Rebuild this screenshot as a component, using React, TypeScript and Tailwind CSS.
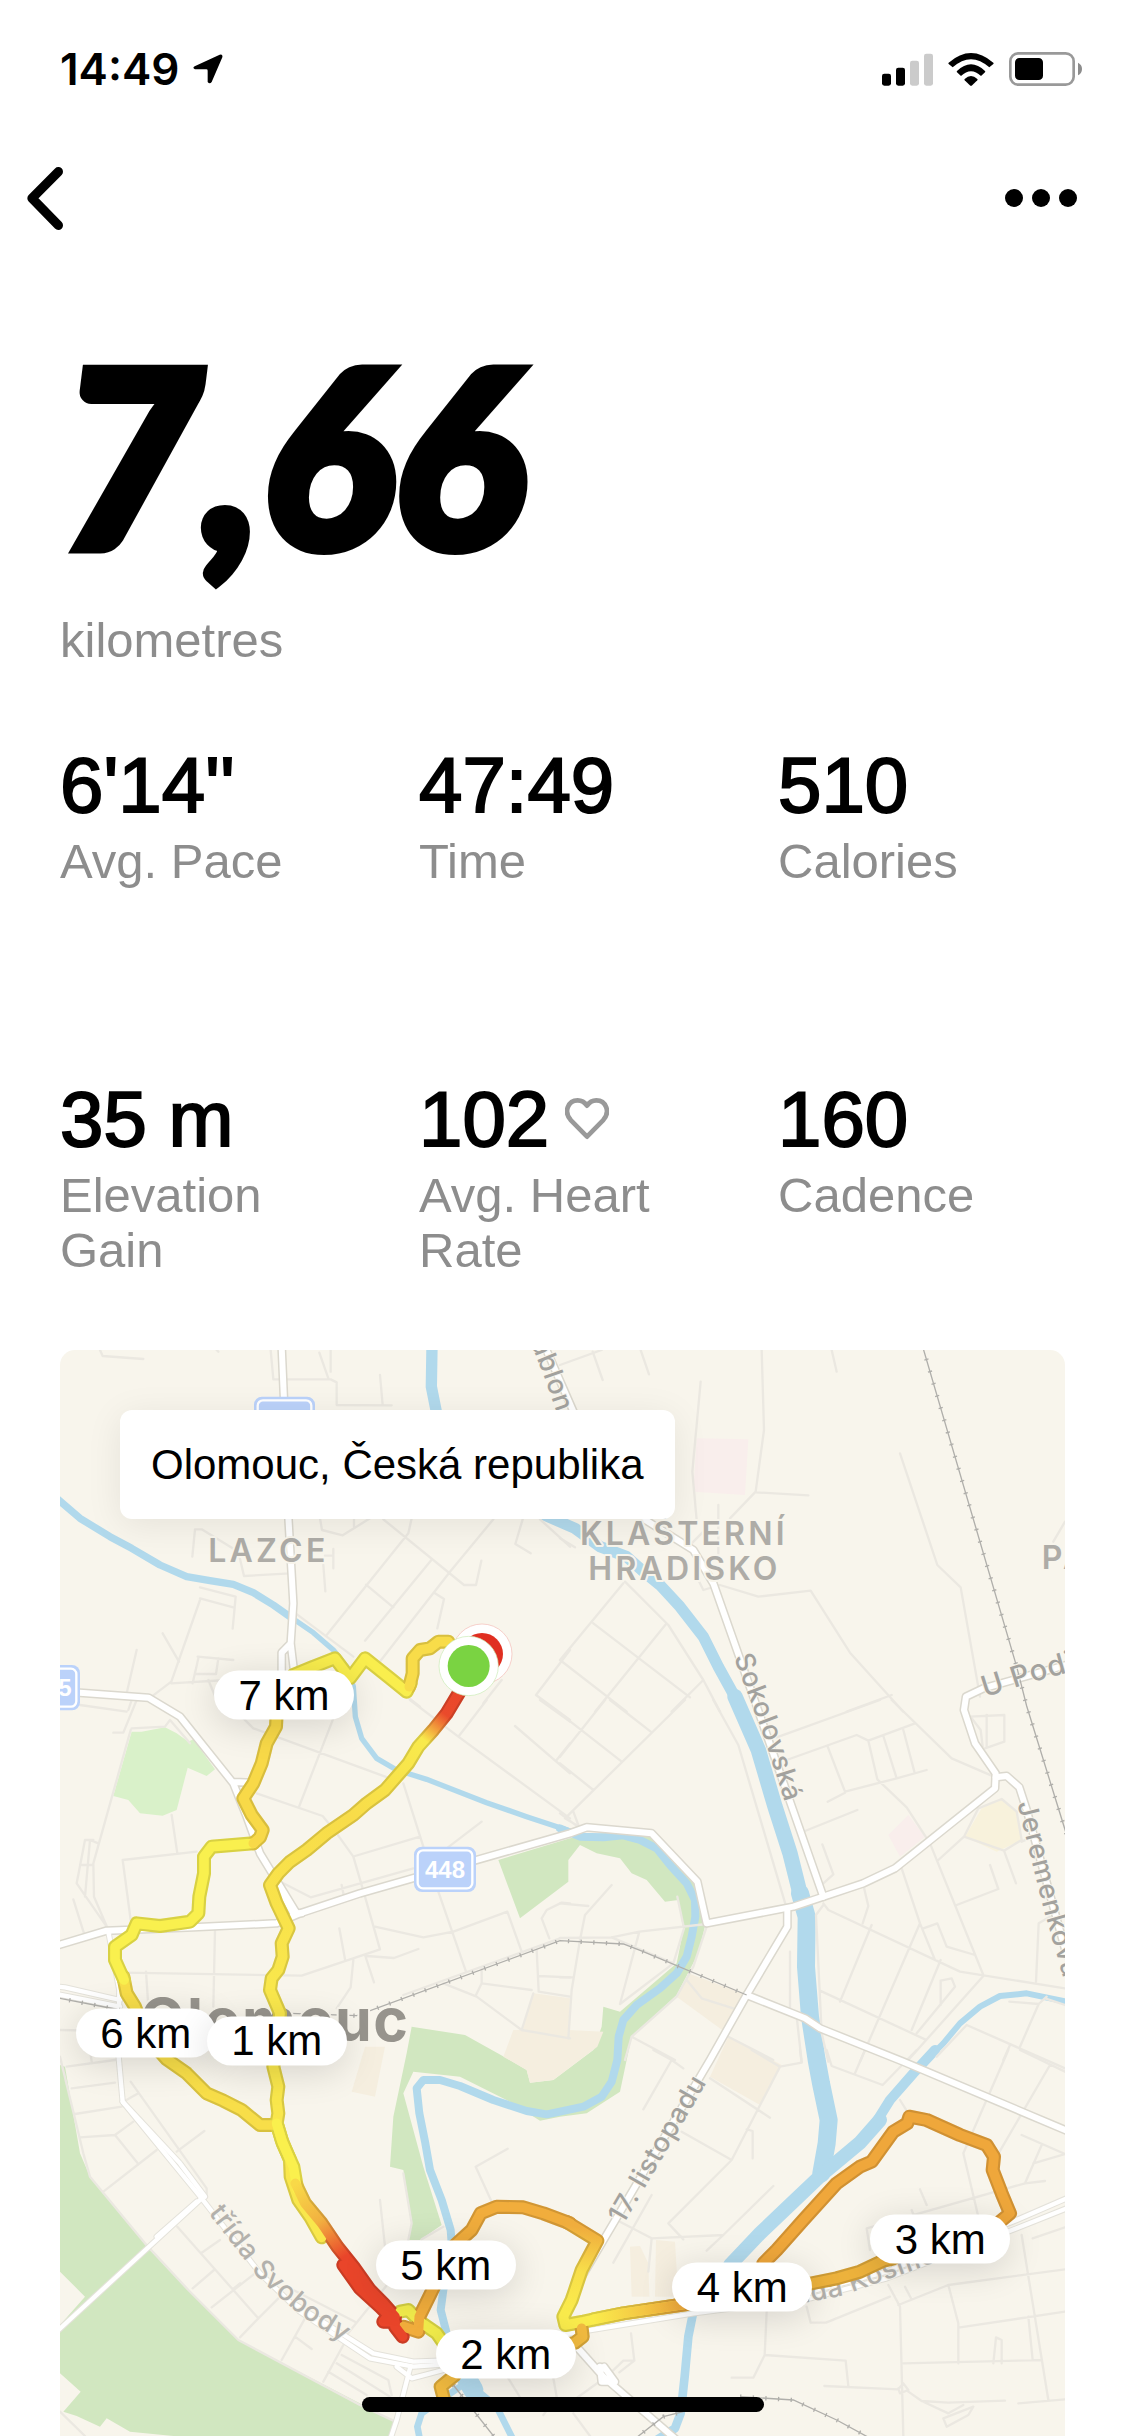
import { clsx } from "clsx";

const MAP_W = 3015;
const MAP_H = 3258;

const stats = [
  { value: "6'14''", label: "Avg. Pace" },
  { value: "47:49", label: "Time" },
  { value: "510", label: "Calories" },
  { value: "35 m", label: "Elevation Gain" },
  { value: "102", label: "Avg. Heart Rate", heart: true },
  { value: "160", label: "Cadence" },
];

const kmPins = [
  { km: 7, x: 672, y: 1036 },
  { km: 6, x: 257, y: 2050 },
  { km: 1, x: 650, y: 2072 },
  { km: 5, x: 1157, y: 2746 },
  { km: 2, x: 1337, y: 3013 },
  { km: 4, x: 2047, y: 2812 },
  { km: 3, x: 2641, y: 2668 },
];

const rivers = [
  { w: 22, d: "M-10 445L60 505L150 560L215 595L300 645L380 680L450 692L520 703L580 728L640 765L690 800" },
  { w: 16, d: "M690 800L760 848L820 900L860 950L880 1010L886 1100L905 1165L950 1225L1010 1260L1100 1288L1280 1358L1400 1400L1530 1443" },
  { w: 24, d: "M1500 1435L1560 1460L1630 1462L1690 1456L1740 1470L1790 1495L1830 1545L1880 1600L1905 1650L1906 1700L1895 1760L1880 1820L1850 1870L1800 1915L1730 1965L1690 2010L1676 2060L1672 2130L1655 2195L1625 2240L1570 2270L1500 2285L1460 2293L1400 2283L1300 2250L1200 2208L1140 2190L1090 2190L1070 2215L1078 2290L1096 2380L1110 2460L1145 2550L1172 2640L1178 2720L1150 2820L1142 2880L1160 2950L1200 3060" },
  { w: 34, d: "M1116 -10L1114 110L1130 190L1200 350L1350 450L1545 535L1620 590L1700 620L1745 660L1800 705L1860 770L1930 860L1975 950L2030 1050" },
  { w: 46, d: "M2025 1040L2095 1200L2145 1370L2190 1510L2225 1650" },
  { w: 54, d: "M2220 1630L2240 1700L2238 1850L2250 2000L2270 2130L2283 2200L2306 2310L2300 2380L2284 2470" },
  { w: 42, d: "M2460 2310L2400 2378L2284 2475L2200 2555L2100 2650L2010 2745" },
  { w: 30, d: "M2390 2385L2440 2330L2490 2250L2560 2170L2625 2100" },
  { w: 18, d: "M2600 2130L2650 2080L2700 2020L2760 1970L2820 1938L2900 1930L3020 1955" },
  { w: 26, d: "M1905 2860L1885 2960L1874 3080L1862 3190L1845 3235L1790 3270" },
  { w: 60, d: "M1195 3040L1240 3120" },
  { w: 20, d: "M1200 3110L1085 3190L1072 3230L1080 3270M1250 3120L1310 3170L1360 3270" },
];

const mainRoads = [
  "M665 -10L672 150L685 500L700 760L692 880L665 908L665 1000M692 880L704 980",
  "M60 1028L265 1043L360 1100L520 1300L560 1400L600 1510L710 1690M520 1296L575 1298L620 1200",
  "M650 1600L700 1690L725 1690",
  "M-10 1787L140 1742L400 1732L650 1720L720 1690L900 1630L1530 1450L1580 1432L1775 1450L1912 1595L1940 1720L2200 1670L2290 1640L2410 1600L2505 1555L2805 1315L2807 1270L2745 1180L2712 1080L2718 1040L2770 1015L3020 945",
  "M2807 1282L2840 1278L2878 1312L2900 1380L3020 1815",
  "M1455 -10L1560 230L1740 500L1900 600L1960 700L2080 1040L2290 1640",
  "M2182 1680L2182 1730L2060 1935L1950 2130L1530 2840",
  "M2060 1935L2235 2005L2280 2035L2530 2135L3020 2342",
  "M1550 2990L1630 3080L1850 3270M1620 3050L1625 3095L1665 3095L1632 3050",
];

const thinRoads = [
  "M175 2110L188 2255L425 2545L600 2770L720 2885L930 3025L1060 3050L1200 3040",
  "M700 2860L940 3010L1060 3035L1200 3030",
  "M188 2255L360 2440L435 2540",
  "M425 2545L-10 2945M410 2555L290 2660",
  "M1050 3055L1010 3210L990 3270M1010 3050L1055 3085L1150 3060",
  "M-10 1910L15 1912L180 1950M-10 1932L180 1970M145 1745L178 1920L175 2110",
  "M1380 2990L1500 2955L1900 2890L2250 2845L2480 2785L2870 2635L3020 2575",
  "M2250 2825L2480 2765L2870 2610L3020 2545",
];

// Residential streets, one entry per survey square
const streets = [
  {
    x: 0,
    y: 0,
    d: "M120 0L128 18L250 27M632 0L640 88L812 88L830 97L830 165L995 166M778 8L805 85M812 0L812 65M960 75L968 165M470 0L475 5M397 620L405 538L425 538L535 605L552 678L690 670M780 505L786 540L848 556L930 505M882 505L882 530M970 508L1212 705L1248 705L1264 632M1055 505L1045 550L800 855M1300 508L1170 665M1116 628L915 872M918 704L1000 772M1170 665L940 960M1125 730L1152 747L1132 835M1440 508L1530 590M1388 508L1366 582L1412 610M790 645L796 724M795 617L820 617M820 597L820 655M420 712L527 740L518 836M420 745L520 772M420 750L334 995L275 1040M308 850L357 935M413 920L520 930M415 925L398 1000M475 925L468 972L405 972M334 1000L500 990M230 900L200 1030M700 785L880 920M1325 990L1270 1060M1530 900L1428 1035L1530 1110M445 990L470 1050M1015 1020L1080 1070",
  },
  {
    x: 1500,
    y: 0,
    d: "M0 45L125 0M98 5L128 90M242 0L267 73M605 0L612 240L587 425L510 505M422 95L397 365L410 510M587 427L745 436M475 465L475 610M815 0L830 65M395 580L430 545M415 690L430 720L480 705L595 740L752 722L870 908L1030 1085M1020 310L1132 645L1202 712L1260 1040M190 700L0 930M195 695L325 825L430 990L480 1085M100 820L390 1042M320 820L105 1085M0 930L200 1085M430 990L335 1085M995 1035L860 1085M1480 575L1515 515M0 565L45 592",
  },
  {
    x: 0,
    y: 1050,
    d: "M60 15L200 35M230 0L190 98L160 98M215 0L205 30M212 90L100 490L102 590L145 690M100 420L75 420L50 550L140 680M115 430L90 420L75 590M60 495L100 495M40 598L72 700M215 85L315 80L330 60L390 130M335 345L352 460M410 455L188 480L212 660M465 690L460 920M190 818L725 827L960 748L915 590L880 470L830 400L788 348L590 280M258 815L265 920M545 50L580 85L990 235M820 55L718 318M1030 250L1090 440M885 468L1080 410M1160 445L1265 365M670 550L752 592L1060 505M845 555L852 590M945 680L1090 712L1180 695L1342 635L1385 755M1135 575L1218 815M838 685L855 778M915 765L942 847M920 768L1002 774L1075 747M880 780L872 862L830 925M1050 0L1195 110L1530 355M1195 110L1280 0M1365 78L1530 220M1490 180L1530 130M1440 0L1530 65M1430 750L1436 875L1530 890M1265 850L1415 870M1265 805L1265 850L1248 885M1436 828L1530 832M1150 850L1250 890L1385 990L1530 1015M1420 880L1385 990M1030 885L1500 715M1530 610L1505 608L1460 630L1445 655L1468 715M0 990L100 992",
  },
  {
    x: 1500,
    y: 1050,
    d: "M0 40L185 185M135 0L0 170M150 0L275 97M375 0L15 355L60 382M0 190L100 270M0 340L60 385M40 335L55 375M460 0L535 135L680 625M960 0L650 112M995 0L1175 175L1307 232M680 180L890 105L925 122L1065 70M803 140L855 275L1010 235L1100 210M803 305L855 278M925 122L952 238L1040 322L1110 430L1270 825M970 108L1010 235M1030 90L1063 215M735 393L892 330M787 433L820 523L790 550M1230 50L1333 45L1333 125L1275 145M1280 45L1280 140M1235 55L1262 90L1268 140M1212 410L1255 325L1325 297L1370 335L1385 420L1332 452L1212 410L1135 480M1332 452L1368 550M1385 425L1420 410M1290 495L1315 567L1190 615M1025 505L1080 670L1125 780M1090 685L1132 670L1160 740L1245 765M910 555L925 618L908 670M790 610L805 630L1200 815L1515 865M790 615L768 645L785 1000L805 1085M1080 670L900 1085M935 675L840 905M1142 780L1055 990M1142 842L1142 915M1142 842L1175 835L1185 860L1070 1000M780 872L1095 1018M1270 828L1045 1080M1428 845L1436 670L1470 650M690 755L690 925M710 950L725 1085M1220 975L1515 1105M1130 1070L1220 975M1348 905L1436 912L1380 1040M1436 912L1460 890M1515 915L1455 895M1350 1035L1330 1080M0 610L85 618M155 555L75 645L60 720L35 870L25 1015M0 832L40 832M0 714L155 712L238 695L440 672M238 695L180 912L340 790L372 685L352 590M155 712L340 790M380 840L425 895L520 925M440 680L400 800L350 890L215 1010L195 1080M215 1010L345 1080M505 1010L640 1080",
  },
  {
    x: 0,
    y: 2100,
    d: "M0 20L70 310L90 380L255 580L385 720L535 870L900 1065L1000 1112M20 50L165 30M35 115L165 98M45 192L185 170M60 262L165 255L220 215M165 255L232 338M130 425L290 300M90 0L95 35M190 155L235 130M212 95L440 415L440 440M350 305L433 243M352 530L518 718L595 805L540 862M425 608L480 570M398 715L462 660M455 772L585 670M518 718L540 700M595 805L655 745M700 720L885 815M735 805L665 930M705 860L755 897M850 885L790 995M845 915L985 990L995 1035M830 940L990 1040M805 965L920 1035M860 855L985 700M975 590L960 450M1295 455L1247 350L1343 296M1030 370L1055 520L1045 570M1085 568L1150 530M1345 985L1385 1050M1480 985L1490 1040L1450 1095M0 1085L75 1158",
  },
  {
    x: 1500,
    y: 2100,
    d: "M280 0L335 30L250 178M335 30L370 55M575 0L660 50L725 38L720 0M450 85L630 203M660 50L515 330L325 520L370 568M365 245L515 330M560 238L578 243L578 325M180 515L275 565L490 555L640 408M490 555L440 602M275 435L160 638M275 565L265 665M800 0L815 48L968 105L1070 0M885 70L915 0M1020 150L1045 190M1380 0L1515 65M1345 0L1210 310L1255 500M1470 45L1310 320M1385 255L1515 312L1420 340M1445 285L1395 400L1455 393M1395 400L920 535L930 600M1080 418L1100 465M1055 480L1070 520M1385 555L1465 1050M1418 565L1515 532M1015 765L1165 705L1515 658M1165 705L1195 820L1195 940M1195 833L1515 785M1405 800L1418 930M1030 940L1445 930M985 705L1020 770L1030 1158M1035 710L1053 745M740 770L752 818L798 818L990 740M620 785L614 915L580 983L515 983M614 915L857 932L865 1008M793 1008L1015 1018L1030 1000L1045 1020L1020 1030L1015 1015M1045 1025L1085 1053L1165 1058L1335 1052M1085 1053L1165 1090L1210 1065M1150 1105L1240 1070L1225 1095L1160 1130ZM1375 1060L1515 1048M1300 940L1308 862L1325 870L1325 940M213 850L223 932L190 932L150 970M223 932L178 967M125 990L0 1080M40 1090L90 1158",
  },
];

const railways = [
  "M2588 -10L2870 950L2900 1068L3020 1455",
  "M-10 1943L180 1980M690 1990L890 1997L1500 1772L1690 1782L1750 1805L2060 1935",
  "M1720 3270L1810 3200L1870 3185M2040 3140L2200 3150L2330 3210L2440 3270",
  "M1180 3105L1310 3270",
];

const routeParts = [
  { color: "#f8de49", d: "M190 1880L200 1930L225 1970L260 2060L320 2128L380 2170L440 2230L490 2252L545 2280L600 2325L645 2325" },
  { color: "#f9f04e", d: "M580 1480L455 1490L432 1520L432 1570L418 1640L415 1690L390 1715L300 1728L230 1720L215 1755L165 1790L165 1830L192 1890" },
  { color: "#f8d948", d: "M650 1090L648 1130L620 1180L605 1240L580 1300L550 1345L575 1395L608 1440L600 1462L580 1480" },
  { color: "#f9ee4d", d: "M1052 1000L1040 1025L990 985L915 925L870 985L825 925L760 950L700 975" },
  { color: "#f8dc49", d: "M1165 875L1135 875L1110 895L1080 900L1058 925L1058 970L1048 1010" },
  { color: "#f1ec4b", d: "M1020 2885L1045 2880L1080 2915L1130 2950L1165 3000L1190 3060" },
  { color: "url(#outbound)", d: "M1226 980L1160 1090L1120 1140L1075 1190L1045 1240L1010 1280L975 1320L920 1360L880 1395L800 1450L740 1500L690 1535L655 1570L630 1605L650 1660L686 1735L665 1780L668 1820L655 1860L635 1885L630 1920L660 1990L650 2090L640 2150L655 2210L650 2250L655 2290L650 2320L665 2370L690 2430L692 2480L715 2550L750 2600L785 2662" },
  { color: "#faf04d", d: "M650 2320L668 2380L700 2450L712 2520" },
  { color: "url(#finish)", d: "M706 2500L735 2560L785 2620L832 2690L880 2750L930 2820L970 2860L1005 2900" },
  { color: "#f1ad3c", d: "M1030 2930L1075 2945L1078 2900L1110 2835L1180 2690L1235 2640L1262 2590L1310 2570L1390 2572L1450 2590L1530 2620" },
  { color: "#e9452a", d: "M850 2745L900 2815L960 2870L985 2895L970 2915L1005 2915L1005 2930L1028 2960" },
  { color: "url(#return)", d: "M1520 2616L1612 2672L1565 2760L1535 2850L1510 2900L1516 2925L1570 2915L1690 2890L1880 2862" },
  { color: "url(#fade)", d: "M1600 2908L1690 2890L1880 2862" },
  { color: "#efa73b", d: "M2110 2740L2150 2700L2230 2610L2330 2500L2400 2450L2435 2435L2500 2345L2542 2320L2548 2300L2600 2310L2700 2355L2780 2385L2802 2420L2798 2460L2825 2530L2850 2590L2820 2615" },
  { color: "#edb23c", d: "M2500 2725L2470 2732L2400 2765L2330 2785L2230 2805" },
  { color: "#f2bb40", d: "M1565 2935L1568 2960L1545 2978L1450 3010M1185 3075L1142 3110L1155 3160" },
];

const textFont = "font-['Liberation_Sans',Arial,sans-serif]";
const mapFont = "font-['Inter',sans-serif]";

function StatusBar() {
  return (
    <div className="flex h-[138px] items-center justify-between pl-[60px] pr-[43px]">
      <div className="flex items-center gap-3.5">
        <span className={clsx(mapFont, "text-[44px] font-semibold leading-none")}>14:49</span>
        <svg viewBox="0 0 90 90" className="h-[30px] w-[30px]" aria-hidden="true">
          <path d="M5 37L80 2Q90 -1 88 10L56 84Q50 92 44 84L44 50Q44 46 40 46L6 46Q-3 42 5 37Z" />
        </svg>
      </div>
      <div className="flex items-center gap-[15px]">
        <svg viewBox="0 0 153 99" className="h-[33px] w-[51px]" aria-label="Signal strength">
          <rect x="0" y="62" width="27" height="36" rx="7" />
          <rect x="42" y="44" width="27" height="54" rx="7" />
          <rect x="84" y="23" width="27" height="75" rx="7" fill="#cbcbcb" />
          <rect x="126" y="2" width="27" height="96" rx="7" fill="#cbcbcb" />
        </svg>
        <svg viewBox="0 0 138 99" className="h-[33px] w-[46px]" aria-label="Wi-Fi">
          <path d="M2 29Q69 -29 136 29Q138 31 136 33L124 43Q69 -6 14 43L2 33Q0 31 2 29Z" />
          <path d="M27 54Q69 14 111 54Q113 56 111 58L99 69Q69 40 39 69L27 58Q25 56 27 54Z" />
          <path d="M50 78Q69 60 88 78Q90 80 88 82L71 98Q69 99 67 98L50 82Q48 80 50 78Z" />
        </svg>
        <svg viewBox="0 0 219 102" className="h-[34px] w-[73px]" aria-label="Battery">
          <rect x="4" y="4" width="190" height="94" rx="24" fill="none" stroke="#999" strokeWidth="8" />
          <rect x="18" y="18" width="84" height="66" rx="13" />
          <path d="M207 32Q219 38 219 51Q219 64 207 70Z" fill="#8c8c8c" />
        </svg>
      </div>
    </div>
  );
}

function NavBar() {
  return (
    <nav className="flex h-[120px] items-center justify-between pl-[27px] pr-12">
      <button type="button" aria-label="Back" className="h-[63px] w-9">
        <svg viewBox="0 0 108 189" className="h-full w-full">
          <path
            d="M94 14L15 94L94 175"
            fill="none"
            stroke="#000"
            strokeWidth="28"
            strokeLinecap="round"
            strokeLinejoin="round"
          />
        </svg>
      </button>
      <button type="button" aria-label="More options" className="flex items-center gap-[9px]">
        <span className="size-[18px] rounded-full bg-black" />
        <span className="size-[18px] rounded-full bg-black" />
        <span className="size-[18px] rounded-full bg-black" />
      </button>
    </nav>
  );
}

function Stat({ value, label, heart }: { value: string; label: string; heart?: boolean }) {
  return (
    <div className="flex flex-col gap-1">
      <dd className="flex items-center gap-4 text-[78px] leading-[90px] text-black [-webkit-text-stroke:2px_#000]">
        {value}
        {heart && (
          <svg viewBox="0 0 132 126" className="h-[42px] w-11" aria-hidden="true">
            <path
              d="M66 116L18 67C-6 41 10 7 38 7C52 7 60 14 66 23C72 14 80 7 94 7C122 7 138 41 114 67Z"
              fill="none"
              stroke="#999"
              strokeWidth="14"
              strokeLinejoin="round"
            />
          </svg>
        )}
      </dd>
      <dt className="text-[49px] leading-[55px] text-[#8d8d8d]">{label}</dt>
    </div>
  );
}

function Shield({ x, y, w, text }: { x: number; y: number; w: number; text?: string }) {
  return (
    <g>
      <rect x={x} y={y} width={w} height="136" rx="24" fill="#bbd2fa" />
      <rect x={x + 11} y={y + 11} width={w - 22} height="114" rx="16" fill="#bbd2fa" stroke="#fff" strokeWidth="7" />
      {text && (
        <text
          x={x + w / 2}
          y={y + 94}
          textAnchor="middle"
          fill="#fff"
          className="font-['Liberation_Sans_Narrow','Liberation_Sans',sans-serif] text-[72px] font-bold"
        >
          {text}
        </text>
      )}
    </g>
  );
}

function MapDrawing() {
  return (
    <svg viewBox={`0 0 ${MAP_W} ${MAP_H}`} className="block h-auto w-full bg-[#f8f5ec]" role="img" aria-label="Route map">
      <defs>
        <linearGradient id="outbound" gradientUnits="userSpaceOnUse" x1="1226" y1="980" x2="560" y2="1860">
          <stop offset="0" stopColor="#e9452a" />
          <stop offset="0.12" stopColor="#ea4a2b" />
          <stop offset="0.21" stopColor="#f8ea4c" />
          <stop offset="0.5" stopColor="#f8dc49" />
          <stop offset="1" stopColor="#f9e74c" />
        </linearGradient>
        <linearGradient id="finish" gradientUnits="userSpaceOnUse" x1="712" y1="2500" x2="880" y2="2780">
          <stop offset="0" stopColor="#f8d948" />
          <stop offset="0.4" stopColor="#f2b140" />
          <stop offset="0.8" stopColor="#e9452a" />
        </linearGradient>
        <linearGradient id="return" gradientUnits="userSpaceOnUse" x1="1612" y1="2640" x2="1570" y2="2900">
          <stop offset="0" stopColor="#f0ad3d" />
          <stop offset="0.5" stopColor="#f8df4a" />
          <stop offset="1" stopColor="#faec4c" />
        </linearGradient>
        <linearGradient id="fade" gradientUnits="userSpaceOnUse" x1="1600" y1="2900" x2="1860" y2="2860">
          <stop offset="0" stopColor="#faec4c" />
          <stop offset="1" stopColor="#efaa3c" />
        </linearGradient>
        <path id="sokolovska" d="M2021 922L2110 1155L2195 1420" />
        <path id="jeremenkova" d="M2872 1360L2952 1680L3060 2060" />
        <path id="svobody" d="M445 2590L600 2790L720 2895L920 3020" />
        <path id="listopadu" d="M1690 2625L2020 2060" />
        <path id="kosmonautu" d="M2200 2866L2350 2836L2520 2775L2960 2615" />
        <path id="podjezdu" d="M2775 1042L2900 1002L3100 945" />
        <path id="jablonskeho" d="M1412 -20L1445 60L1530 300" />
      </defs>

      {/* Parks and built-up areas */}
      <g fill="#d1e7c0">
        <path d="M1315 1530L1530 1465L1630 1450L1780 1450L1830 1500L1900 1590L1930 1680L1937 1720L1915 1810L1850 1935L1715 2060L1700 2130L1680 2225L1580 2290L1500 2300L1440 2312L1350 2255L1200 2180L1060 2165L1030 2230L1090 2450L1145 2625L1080 2670L1045 2670L1055 2610L1030 2460L990 2450L1000 2300L1040 2110L1055 2030L1215 2055L1340 2125L1400 2160L1410 2198L1480 2190L1600 2100L1625 2030L1630 1970L1680 1985L1850 1840L1870 1740L1855 1650L1815 1655L1760 1590L1715 1570L1680 1525L1610 1510L1560 1485L1525 1530L1525 1595L1380 1705Z" />
        <path d="M0 2145L15 2150L60 2410L90 2480L255 2680L385 2820L535 2970L1000 3212L1000 3258L340 3258L210 3245L140 3205L120 3230L50 3198L10 3185L62 3125L0 3070L0 2925L75 2840L0 2765Z" />
      </g>
      <path
        d="M215 1145L245 1145L315 1132L350 1150L385 1175L400 1168L465 1258L440 1278L383 1253L350 1380L308 1397L240 1390L205 1350L160 1338Z"
        fill="#d9f1c9"
      />
      <g fill="#f5eedf">
        <path d="M1420 1930L1530 1945L1525 2040L1630 2045L1612 2090L1480 2190L1410 2198L1400 2160L1330 2120L1360 2040L1385 2040Z" />
        <path d="M1885 1870L2060 1935L2000 2050L1850 1940Z" />
        <path d="M2005 2060L2165 2145L2100 2265L1950 2180Z" />
        <path d="M915 2090L975 2090L945 2240L875 2225Z" />
        <path d="M1710 2690L1740 2688L1765 2740L1768 2840L1715 2840ZM1788 2670L1845 2675L1855 2840L1785 2840Z" />
      </g>
      <g fill="#f9eeec">
        <path d="M1910 265L2065 268L2055 435L1900 425Z" />
        <path d="M2545 1395L2595 1460L2520 1520L2485 1455Z" />
      </g>
      <path d="M2765 1375L2825 1347L2870 1385L2885 1470L2810 1505L2715 1460Z" fill="#f8f2dc" />

      <g fill="none" strokeLinecap="round" strokeLinejoin="round">
        <g stroke="#b1d9ec">
          {rivers.map((r) => (
            <path key={r.d} d={r.d} strokeWidth={r.w} />
          ))}
        </g>
        <g stroke="#ebe8e1" strokeWidth="7">
          {streets.map((s) => (
            <path key={s.d} d={s.d} transform={`translate(${s.x} ${s.y})`} />
          ))}
        </g>
        <g stroke="#dbd8ce">
          {mainRoads.map((d) => (
            <path key={d} d={d} strokeWidth="27" />
          ))}
          {thinRoads.map((d) => (
            <path key={d} d={d} strokeWidth="19" stroke="#e4e2da" />
          ))}
        </g>
        <g stroke="#fff">
          {mainRoads.map((d) => (
            <path key={d} d={d} strokeWidth="18" />
          ))}
          {thinRoads.map((d) => (
            <path key={d} d={d} strokeWidth="13" />
          ))}
        </g>
      </g>
      <g fill="none" stroke="#b0afab">
        {railways.map((d) => (
          <g key={d}>
            <path d={d} strokeWidth="4" />
            <path d={d} strokeWidth="13" strokeDasharray="4 34" />
          </g>
        ))}
      </g>

      <Shield x={582} y={140} w={183} />
      <Shield x={-70} y={945} w={130} text="35" />
      <Shield x={1062} y={1490} w={186} text="448" />

      {/* Place names */}
      <g
        fill="#aeaca7"
        stroke="#f8f5ec"
        strokeWidth="12"
        strokeLinejoin="round"
        paintOrder="stroke"
        className={clsx(mapFont, "text-[96px] font-semibold tracking-widest")}
      >
        <text x="445" y="635">LAZCE</text>
        <text x="1560" y="585">KLÁŠTERNÍ</text>
        <text x="1585" y="690">HRADISKO</text>
        <text x="2945" y="657">PA</text>
        <text x="240" y="2074" fill="#97948d" className="text-[177px] font-bold tracking-wide">
          Olomouc
        </text>
      </g>
      <g
        fill="#a3a29e"
        stroke="#f8f5ec"
        strokeWidth="6"
        paintOrder="stroke"
        className={clsx(mapFont, "text-[81px] font-medium tracking-wide")}
      >
        <text><textPath href="#sokolovska">Sokolovská</textPath></text>
        <text><textPath href="#jeremenkova">Jeremenkova</textPath></text>
        <text fill="#b3b1ac"><textPath href="#svobody">třída Svobody</textPath></text>
        <text><textPath href="#listopadu">17. listopadu</textPath></text>
        <text fill="#b3b1ac"><textPath href="#kosmonautu">řída Kosmonautů</textPath></text>
        <text className="text-[87px]"><textPath href="#podjezdu">U Podjezdu</textPath></text>
        <text><textPath href="#jablonskeho">ablonského</textPath></text>
      </g>

      {/* Run, coloured by pace */}
      <g fill="none" strokeLinecap="round" strokeLinejoin="round">
        {routeParts.map((p) => (
          <g key={p.d}>
            <path d={p.d} stroke={p.color} strokeWidth="42" />
            <path d={p.d} stroke="#000" strokeOpacity="0.13" strokeWidth="42" />
          </g>
        ))}
        {routeParts.map((p) => (
          <path key={p.d} d={p.d} stroke={p.color} strokeWidth="29" />
        ))}
      </g>
      <circle cx="1266" cy="912" r="90" fill="#fff" stroke="#f3b9b3" strokeWidth="2" />
      <circle cx="1266" cy="912" r="63" fill="#e02f21" />
      <circle cx="1226" cy="948" r="89" fill="#fff" stroke="#c9ecb4" strokeWidth="2" />
      <circle cx="1226" cy="948" r="63" fill="#7ad342" />
    </svg>
  );
}

function RouteMap() {
  return (
    <section className="relative mx-[60px] overflow-hidden rounded-t-[15px]">
      <MapDrawing />
      <p className="absolute left-[60px] top-[60px] whitespace-nowrap rounded-[12px] bg-white px-[31px] py-[30px] text-[42px] leading-[49px] shadow-[0_6px_36px_rgba(0,0,0,0.08)]">
        Olomouc, Česká republika
      </p>
      {kmPins.map((pin) => (
        <span
          key={pin.km}
          className="absolute flex h-[49px] w-[140px] -translate-x-1/2 -translate-y-1/2 items-center justify-center rounded-full bg-white text-[42px] leading-none shadow-[0_6px_36px_rgba(0,0,0,0.14)]"
          style={{ left: `${(pin.x / MAP_W) * 100}%`, top: `${(pin.y / MAP_H) * 100}%` }}
        >
          {pin.km} km
        </span>
      ))}
    </section>
  );
}

export default function App() {
  return (
    <main className={clsx(textFont, "relative w-full overflow-hidden bg-white text-black")}>
      <StatusBar />
      <NavBar />
      <header className="px-[60px] pt-[55px]">
        <h1 className="mb-5 font-['Lato',sans-serif] text-[246px] font-black italic leading-[280px] [-webkit-text-stroke:10px_#000]">
          7,66
        </h1>
        <p className="text-[49px] leading-[55px] text-[#8d8d8d]">kilometres</p>
      </header>
      <dl className="grid grid-cols-3 gap-x-[72px] gap-y-[185px] px-[60px] pb-[72px] pt-[72px]">
        {stats.map((s) => (
          <Stat key={s.label} {...s} />
        ))}
      </dl>
      <RouteMap />
      <div className="absolute bottom-6 left-1/2 h-[15px] w-[402px] -translate-x-1/2 rounded-full bg-black" />
    </main>
  );
}
